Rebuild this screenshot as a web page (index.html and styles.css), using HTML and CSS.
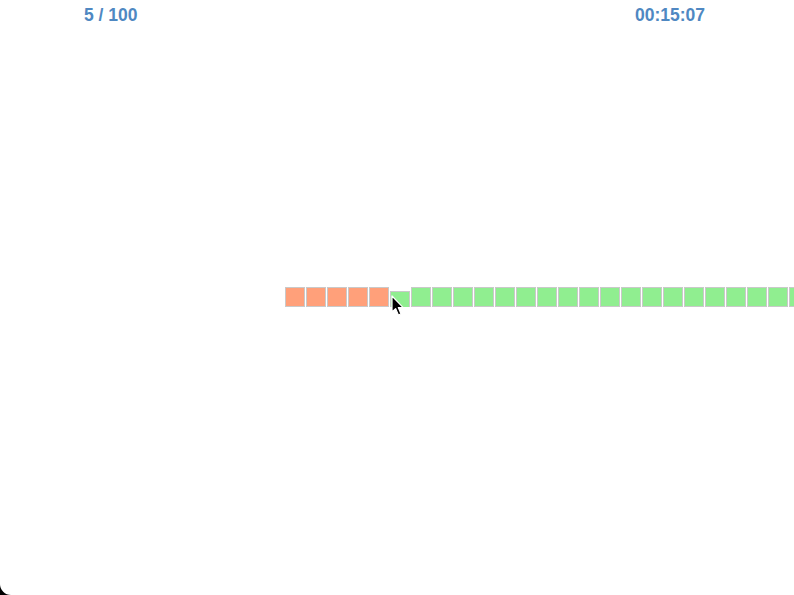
FILE: index.html
```
<!DOCTYPE html>
<html>
<head>
<meta charset="utf-8">
<link rel="stylesheet" href="styles.css">
</head>
<body>
<div class="page">
  <header class="bar">
    <span class="count">5 / 100</span>
    <span class="timer">00:15:07</span>
  </header>
  <div class="track">
    <div class="row" id="row"></div>
  </div>
  <svg class="cursor" width="14" height="22" viewBox="0 0 14 22">
    <path d="M1 1 L1 17 L4.6 13.6 L7.4 20 L10 18.9 L7.3 12.6 L12.2 12.6 Z" fill="#000" stroke="#fff" stroke-width="1.2" stroke-linejoin="round"/>
  </svg>
</div>
<script src="script.js"></script>
</body>
</html>
```
FILE: styles.css
```
html {
  margin: 0;
  background: #000;
}
body {
  margin: 0;
  width: 794px;
  height: 595px;
  overflow: hidden;
}
.page {
  position: relative;
  width: 794px;
  height: 595px;
  background: #fff;
  border-bottom-left-radius: 11px;
  overflow: hidden;
  font-family: "Liberation Sans", Arial, sans-serif;
}
.bar {
  display: flex;
  justify-content: space-between;
  padding: 5px 89px 0 84px;
  font-weight: bold;
  font-size: 17.5px;
  color: #4f88c2;
}
.track {
  padding: 261px 0 0 285px;
  overflow: hidden;
}
.row {
  display: flex;
  gap: 1px;
  width: max-content;
}
.sq {
  width: 20px;
  height: 20px;
  box-sizing: border-box;
  border: 1px solid #c9c9c9;
  background: #90ee90;
  flex: none;
}
.sq.done {
  background: #ffa07a;
}
.sq.hover {
  transform: translateY(4px);
}
.cursor {
  position: absolute;
  left: 391px;
  top: 295px;
}
```
FILE: script.js
```
var row = document.getElementById('row');
for (var i = 0; i < 100; i++) {
  var d = document.createElement('div');
  d.className = 'sq' + (i < 5 ? ' done' : '') + (i === 5 ? ' hover' : '');
  row.appendChild(d);
}
```
